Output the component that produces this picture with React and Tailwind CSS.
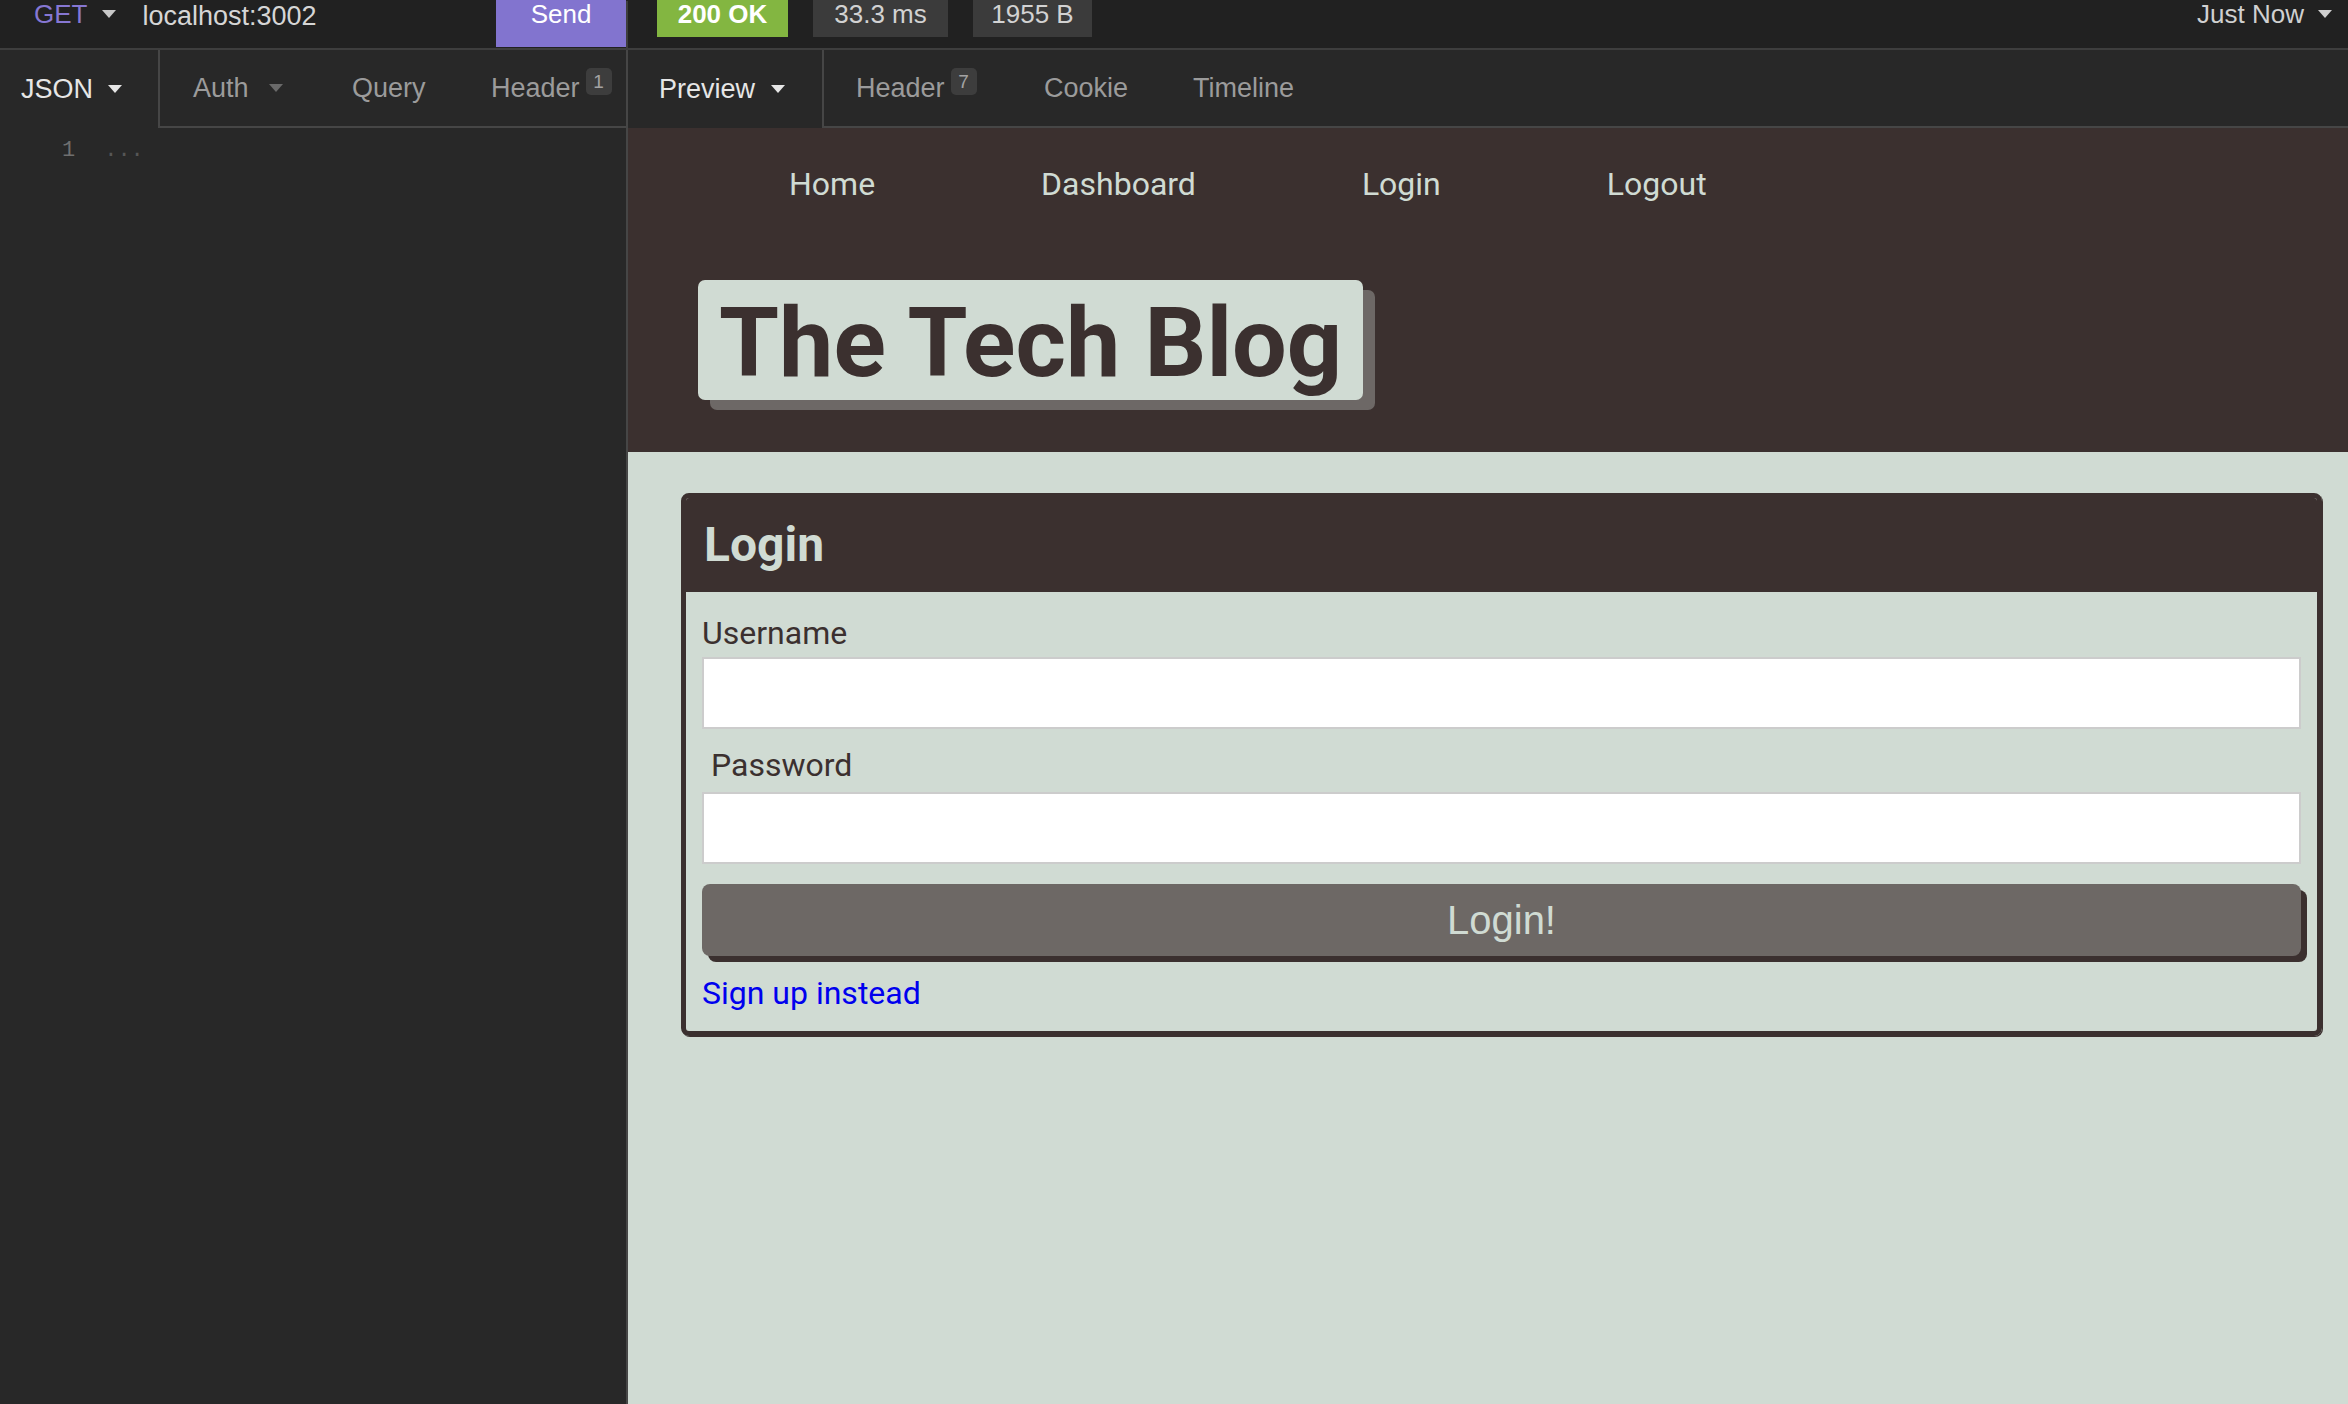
import React from "react";

function Caret({ className = "" }) {
  return (
    <svg width="14" height="8" viewBox="0 0 14 8" className={className}>
      <path d="M0 0h14L7 8z" fill="currentColor" />
    </svg>
  );
}

function Count({ n }) {
  return (
    <span className="ml-[6px] -translate-y-[7px] inline-flex h-[27px] w-[26px] items-center justify-center rounded-[5px] bg-[#3d3d3d] text-[19px] leading-none text-[#a3a3a3]">
      {n}
    </span>
  );
}

function Tab({ width, pad, children, active }) {
  return (
    <div
      className={
        "flex h-full items-center " +
        width +
        " " +
        pad +
        (active ? " text-[#e6e6e6]" : " border-b-2 border-[#464646] text-[#9b9b9b]")
      }
    >
      {children}
    </div>
  );
}

export default function App() {
  const blog = "font-['Roboto','Noto_Sans',sans-serif]";

  return (
    <div className="flex h-[1404px] w-[2348px] flex-col overflow-hidden font-['Liberation_Sans',Arial,sans-serif] text-[26px]">
      {/* request / response bar */}
      <div className="flex h-[50px] shrink-0 border-b-2 border-[#3e3e3e] bg-[#212121] pt-[1px] leading-[26px]">
        <div className="flex w-[628px] items-start border-r-2 border-[#3e3e3e]">
          <span className="ml-[34px] text-[#8677d3]">GET</span>
          <Caret className="ml-[15px] mt-[9px] text-[#c8c8c8]" />
          <span className="ml-[26px] pt-[1px] text-[27px] leading-[28px] text-[#d6d6d6]">localhost:3002</span>
          <button className="-mt-[1px] ml-auto flex h-[47px] w-[130px] justify-center bg-[#8274cf] pt-[1px] text-white">
            Send
          </button>
        </div>
        <div className="-mt-[1px] flex flex-1 items-start">
          <span className="ml-[29px] flex h-[37px] w-[131px] justify-center bg-[#83b641] pt-[1px] font-bold text-white">
            200 OK
          </span>
          <span className="ml-[25px] flex h-[37px] w-[135px] justify-center bg-[#3b3b3b] pt-[1px] text-[#d2d2d2]">
            33.3 ms
          </span>
          <span className="ml-[25px] flex h-[37px] w-[119px] justify-center bg-[#3b3b3b] pt-[1px] text-[#d2d2d2]">
            1955 B
          </span>
          <span className="ml-auto pt-[1px] text-[#d0d0d0]">Just Now</span>
          <Caret className="ml-[14px] mr-[16px] mt-[10px] text-[#d0d0d0]" />
        </div>
      </div>

      {/* tabs */}
      <div className="flex h-[78px] shrink-0 bg-[#282828] text-[27px]">
        <div className="flex w-[628px] border-r-2 border-[#464646]">
          <Tab width="w-[158px]" pad="pl-[21px]" active>
            JSON
            <Caret className="ml-[15px] text-[#e6e6e6]" />
          </Tab>
          <div className="flex h-full w-[162px] items-center border-b-2 border-l-2 border-[#464646] pl-[33px] text-[#9b9b9b]">
            Auth
            <Caret className="ml-[20px] text-[#6a6a6a]" />
          </div>
          <Tab width="w-[138px]" pad="pl-[32px]">
            Query
          </Tab>
          <Tab width="flex-1" pad="pl-[33px]">
            Header
            <Count n="1" />
          </Tab>
        </div>
        <div className="flex flex-1">
          <div className="flex h-full w-[196px] items-center border-r-2 border-[#464646] pl-[31px] text-[#e6e6e6]">
            Preview
            <Caret className="ml-[16px] text-[#e6e6e6]" />
          </div>
          <Tab width="w-[186px]" pad="pl-[32px]">
            Header
            <Count n="7" />
          </Tab>
          <Tab width="w-[150px]" pad="pl-[34px]">
            Cookie
          </Tab>
          <Tab width="w-[168px]" pad="pl-[33px]">
            Timeline
          </Tab>
          <Tab width="flex-1" pad="" />
        </div>
      </div>

      {/* body */}
      <div className="flex flex-1">
        <div className="flex w-[628px] shrink-0 items-start border-r-2 border-[#464646] bg-[#282828] pl-[62px] pt-[10px] font-['Liberation_Mono',monospace] text-[22px] leading-[26px]">
          <span className="text-[#6f6f6f]">1</span>
          <span className="ml-[29px] text-[#565656]">...</span>
        </div>

        <div className={"flex flex-1 flex-col " + blog}>
          <header className="h-[324px] shrink-0 bg-[#3b302f]">
            <nav className="flex gap-[166px] pl-[161px] pt-[37px] text-[32px] leading-[38px] text-[#d0dbd3]">
              <a>Home</a>
              <a>Dashboard</a>
              <a>Login</a>
              <a>Logout</a>
            </nav>
            <div className="ml-[70px] mt-[77px] h-[120px] w-fit rounded-[7px] bg-[#d0dbd3] px-[21px] text-[97px] font-bold leading-[126px] text-[#3b302f] shadow-[12px_10px_0_#6d6866]">
              The Tech Blog
            </div>
          </header>

          <main className="flex-1 bg-[#d0dbd3] pl-[53px] pr-[26px] pt-[41px]">
            <section className="overflow-hidden rounded-[8px] border-[5px] border-[#3b302f] shadow-[1px_1px_0_#3b302f]">
              <div className="flex h-[94px] items-center bg-[#3b302f] pl-[18px] text-[48px] font-bold text-[#d0dbd3]">
                Login
              </div>
              <form className="px-[16px] pb-[19px] pt-[22px] text-[32px] leading-[38px] text-[#3b302f]">
                <label className="block">Username</label>
                <input className="mt-[5px] block h-[72px] w-full border-2 border-[#cccccc] bg-white" />
                <label className="mt-[17px] block pl-[9px]">Password</label>
                <input type="password" className="mt-[8px] block h-[72px] w-full border-2 border-[#cccccc] bg-white" />
                <button
                  type="button"
                  className="mt-[20px] flex h-[72px] w-full items-center justify-center rounded-[8px] bg-[#6d6865] font-['Liberation_Sans',Arial,sans-serif] text-[40px] text-[#d0dbd3] shadow-[6px_6px_0_#3b302f]"
                >
                  Login!
                </button>
                <a className="mt-[18px] block w-fit text-[#0000ee]">Sign up instead</a>
              </form>
            </section>
          </main>
        </div>
      </div>
    </div>
  );
}
